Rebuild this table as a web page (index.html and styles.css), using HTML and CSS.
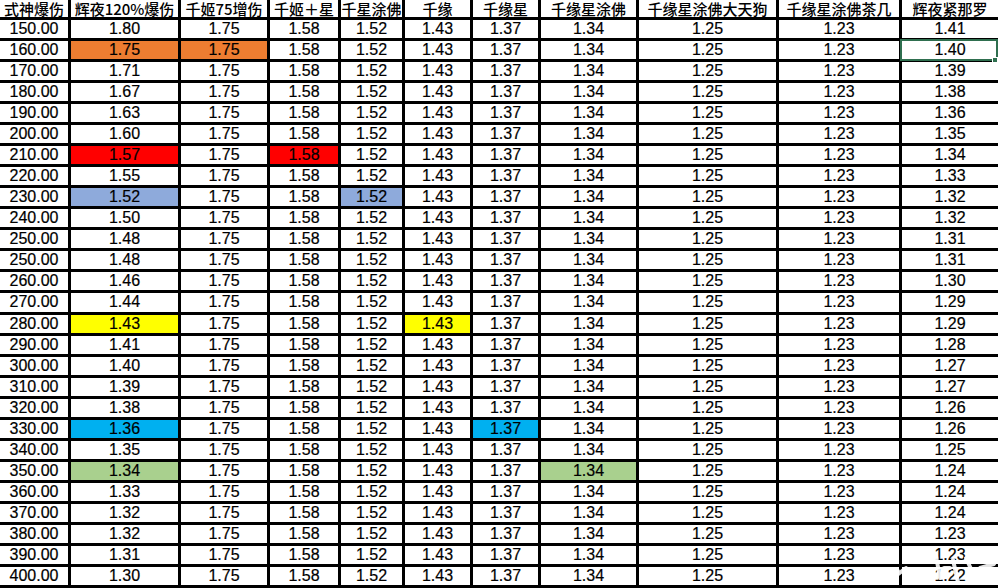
FILE: index.html
```html
<!DOCTYPE html>
<html lang="zh">
<head>
<meta charset="utf-8">
<title>式神爆伤</title>
<link rel="stylesheet" href="styles.css">
</head>
<body>
<div class="page">
<div class="sheet">
<div class="c h">式神爆伤</div><div class="c h">辉夜120%爆伤</div><div class="c h">千姬75增伤</div><div class="c h">千姬＋星</div><div class="c h">千星涂佛</div><div class="c h">千缘</div><div class="c h">千缘星</div><div class="c h">千缘星涂佛</div><div class="c h">千缘星涂佛大天狗</div><div class="c h">千缘星涂佛茶几</div><div class="c h">辉夜紧那罗</div>
<div class="c">150.00</div><div class="c">1.80</div><div class="c">1.75</div><div class="c">1.58</div><div class="c">1.52</div><div class="c">1.43</div><div class="c">1.37</div><div class="c">1.34</div><div class="c">1.25</div><div class="c">1.23</div><div class="c">1.41</div>
<div class="c">160.00</div><div class="c o">1.75</div><div class="c o">1.75</div><div class="c">1.58</div><div class="c">1.52</div><div class="c">1.43</div><div class="c">1.37</div><div class="c">1.34</div><div class="c">1.25</div><div class="c">1.23</div><div class="c sel">1.40</div>
<div class="c">170.00</div><div class="c">1.71</div><div class="c">1.75</div><div class="c">1.58</div><div class="c">1.52</div><div class="c">1.43</div><div class="c">1.37</div><div class="c">1.34</div><div class="c">1.25</div><div class="c">1.23</div><div class="c">1.39</div>
<div class="c">180.00</div><div class="c">1.67</div><div class="c">1.75</div><div class="c">1.58</div><div class="c">1.52</div><div class="c">1.43</div><div class="c">1.37</div><div class="c">1.34</div><div class="c">1.25</div><div class="c">1.23</div><div class="c">1.38</div>
<div class="c">190.00</div><div class="c">1.63</div><div class="c">1.75</div><div class="c">1.58</div><div class="c">1.52</div><div class="c">1.43</div><div class="c">1.37</div><div class="c">1.34</div><div class="c">1.25</div><div class="c">1.23</div><div class="c">1.36</div>
<div class="c">200.00</div><div class="c">1.60</div><div class="c">1.75</div><div class="c">1.58</div><div class="c">1.52</div><div class="c">1.43</div><div class="c">1.37</div><div class="c">1.34</div><div class="c">1.25</div><div class="c">1.23</div><div class="c">1.35</div>
<div class="c">210.00</div><div class="c rd">1.57</div><div class="c">1.75</div><div class="c rd">1.58</div><div class="c">1.52</div><div class="c">1.43</div><div class="c">1.37</div><div class="c">1.34</div><div class="c">1.25</div><div class="c">1.23</div><div class="c">1.34</div>
<div class="c">220.00</div><div class="c">1.55</div><div class="c">1.75</div><div class="c">1.58</div><div class="c">1.52</div><div class="c">1.43</div><div class="c">1.37</div><div class="c">1.34</div><div class="c">1.25</div><div class="c">1.23</div><div class="c">1.33</div>
<div class="c">230.00</div><div class="c bl">1.52</div><div class="c">1.75</div><div class="c">1.58</div><div class="c bl">1.52</div><div class="c">1.43</div><div class="c">1.37</div><div class="c">1.34</div><div class="c">1.25</div><div class="c">1.23</div><div class="c">1.32</div>
<div class="c">240.00</div><div class="c">1.50</div><div class="c">1.75</div><div class="c">1.58</div><div class="c">1.52</div><div class="c">1.43</div><div class="c">1.37</div><div class="c">1.34</div><div class="c">1.25</div><div class="c">1.23</div><div class="c">1.32</div>
<div class="c">250.00</div><div class="c">1.48</div><div class="c">1.75</div><div class="c">1.58</div><div class="c">1.52</div><div class="c">1.43</div><div class="c">1.37</div><div class="c">1.34</div><div class="c">1.25</div><div class="c">1.23</div><div class="c">1.31</div>
<div class="c">250.00</div><div class="c">1.48</div><div class="c">1.75</div><div class="c">1.58</div><div class="c">1.52</div><div class="c">1.43</div><div class="c">1.37</div><div class="c">1.34</div><div class="c">1.25</div><div class="c">1.23</div><div class="c">1.31</div>
<div class="c">260.00</div><div class="c">1.46</div><div class="c">1.75</div><div class="c">1.58</div><div class="c">1.52</div><div class="c">1.43</div><div class="c">1.37</div><div class="c">1.34</div><div class="c">1.25</div><div class="c">1.23</div><div class="c">1.30</div>
<div class="c">270.00</div><div class="c">1.44</div><div class="c">1.75</div><div class="c">1.58</div><div class="c">1.52</div><div class="c">1.43</div><div class="c">1.37</div><div class="c">1.34</div><div class="c">1.25</div><div class="c">1.23</div><div class="c">1.29</div>
<div class="c">280.00</div><div class="c y">1.43</div><div class="c">1.75</div><div class="c">1.58</div><div class="c">1.52</div><div class="c y">1.43</div><div class="c">1.37</div><div class="c">1.34</div><div class="c">1.25</div><div class="c">1.23</div><div class="c">1.29</div>
<div class="c">290.00</div><div class="c">1.41</div><div class="c">1.75</div><div class="c">1.58</div><div class="c">1.52</div><div class="c">1.43</div><div class="c">1.37</div><div class="c">1.34</div><div class="c">1.25</div><div class="c">1.23</div><div class="c">1.28</div>
<div class="c">300.00</div><div class="c">1.40</div><div class="c">1.75</div><div class="c">1.58</div><div class="c">1.52</div><div class="c">1.43</div><div class="c">1.37</div><div class="c">1.34</div><div class="c">1.25</div><div class="c">1.23</div><div class="c">1.27</div>
<div class="c">310.00</div><div class="c">1.39</div><div class="c">1.75</div><div class="c">1.58</div><div class="c">1.52</div><div class="c">1.43</div><div class="c">1.37</div><div class="c">1.34</div><div class="c">1.25</div><div class="c">1.23</div><div class="c">1.27</div>
<div class="c">320.00</div><div class="c">1.38</div><div class="c">1.75</div><div class="c">1.58</div><div class="c">1.52</div><div class="c">1.43</div><div class="c">1.37</div><div class="c">1.34</div><div class="c">1.25</div><div class="c">1.23</div><div class="c">1.26</div>
<div class="c">330.00</div><div class="c sk">1.36</div><div class="c">1.75</div><div class="c">1.58</div><div class="c">1.52</div><div class="c">1.43</div><div class="c sk">1.37</div><div class="c">1.34</div><div class="c">1.25</div><div class="c">1.23</div><div class="c">1.26</div>
<div class="c">340.00</div><div class="c">1.35</div><div class="c">1.75</div><div class="c">1.58</div><div class="c">1.52</div><div class="c">1.43</div><div class="c">1.37</div><div class="c">1.34</div><div class="c">1.25</div><div class="c">1.23</div><div class="c">1.25</div>
<div class="c">350.00</div><div class="c g">1.34</div><div class="c">1.75</div><div class="c">1.58</div><div class="c">1.52</div><div class="c">1.43</div><div class="c">1.37</div><div class="c g">1.34</div><div class="c">1.25</div><div class="c">1.23</div><div class="c">1.24</div>
<div class="c">360.00</div><div class="c">1.33</div><div class="c">1.75</div><div class="c">1.58</div><div class="c">1.52</div><div class="c">1.43</div><div class="c">1.37</div><div class="c">1.34</div><div class="c">1.25</div><div class="c">1.23</div><div class="c">1.24</div>
<div class="c">370.00</div><div class="c">1.32</div><div class="c">1.75</div><div class="c">1.58</div><div class="c">1.52</div><div class="c">1.43</div><div class="c">1.37</div><div class="c">1.34</div><div class="c">1.25</div><div class="c">1.23</div><div class="c">1.24</div>
<div class="c">380.00</div><div class="c">1.32</div><div class="c">1.75</div><div class="c">1.58</div><div class="c">1.52</div><div class="c">1.43</div><div class="c">1.37</div><div class="c">1.34</div><div class="c">1.25</div><div class="c">1.23</div><div class="c">1.23</div>
<div class="c">390.00</div><div class="c">1.31</div><div class="c">1.75</div><div class="c">1.58</div><div class="c">1.52</div><div class="c">1.43</div><div class="c">1.37</div><div class="c">1.34</div><div class="c">1.25</div><div class="c">1.23</div><div class="c">1.23</div>
<div class="c">400.00</div><div class="c">1.30</div><div class="c">1.75</div><div class="c">1.58</div><div class="c">1.52</div><div class="c">1.43</div><div class="c">1.37</div><div class="c">1.34</div><div class="c">1.25</div><div class="c">1.23</div><div class="c">1.22</div>
</div>
<svg class="wm" width="140" height="50" viewBox="0 0 140 50" aria-hidden="true">
<g fill="none" stroke="#fff" stroke-width="4" stroke-linecap="round" opacity="0.9">
<path d="M14 34 L40 33 M60 22 L70 24 M78 18 L82 40 M95 22 L100 44 M108 20 L118 42 M122 30 L136 26"/>
<path d="M30 44 L48 30 M56 36 L66 44 M86 30 L92 30"/>
</g>
</svg>
</div>
</body>
</html>
```
FILE: styles.css
```css
html, body {
  margin: 0;
  padding: 0;
  background: #fff;
}

.page {
  position: relative;
  width: 998px;
  height: 588px;
  overflow: hidden;
}

.sheet {
  width: 998px;
  height: 588px;
  box-sizing: border-box;
  padding-bottom: 3px;
  display: grid;
  grid-template-columns: 68px 107px 86px 68px 61px 65px 65px 95px 137px 120px 1fr;
  grid-template-rows: 17px repeat(27, 1fr);
  gap: 3px;
  background: #000;
  font-family: "Liberation Sans", Arial, "Noto Sans CJK SC", sans-serif;
  font-size: 16px;
  color: #000;
}

.c {
  background: #fff;
  display: flex;
  align-items: center;
  justify-content: center;
  line-height: 18px;
  white-space: nowrap;
  overflow: hidden;
  min-width: 0;
  min-height: 0;
  -webkit-text-stroke: 0.2px #000;
}

.h {
  font-family: "Noto Sans CJK SC", "Liberation Sans", sans-serif;
  font-size: 15px;
  font-weight: 500;
  line-height: 17px;
  overflow: visible;
  -webkit-text-stroke: 0;
}

.o { background: #ed7d31; }
.rd { background: #ff0000; }
.bl { background: #8eaadb; }
.y { background: #ffff00; }
.sk { background: #00b0f0; }
.g { background: #a9d08e; }

.sel {
  position: relative;
  overflow: visible;
}

.sel::after {
  content: "";
  position: absolute;
  top: -2px;
  bottom: -2px;
  left: -2px;
  right: 0;
  border: 2px solid #2f6f4f;
}

.sel::before {
  content: "";
  position: absolute;
  right: 0;
  bottom: -4px;
  width: 4px;
  height: 4px;
  background: #2f6f4f;
  border: 1px solid #fff;
  z-index: 1;
}

.wm {
  position: absolute;
  right: 0;
  bottom: 0;
}
```
